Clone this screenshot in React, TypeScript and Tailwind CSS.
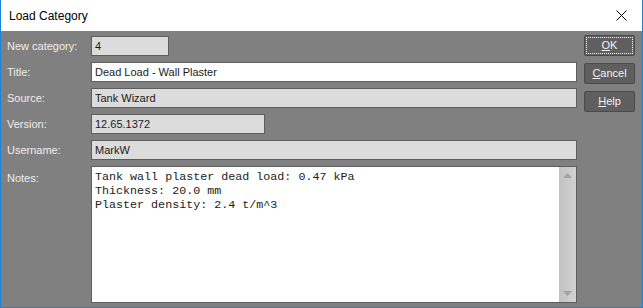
import React from 'react';

const fields = [
  { label: 'New category:', value: '4', width: 'w-[78px]', editable: false },
  { label: 'Title:', value: 'Dead Load - Wall Plaster', width: 'w-full', editable: true },
  { label: 'Source:', value: 'Tank Wizard', width: 'w-full', editable: false },
  { label: 'Version:', value: '12.65.1372', width: 'w-[174px]', editable: false },
  { label: 'Username:', value: 'MarkW', width: 'w-full', editable: false },
];

const notes = ['Tank wall plaster dead load: 0.47 kPa', 'Thickness: 20.0 mm', 'Plaster density: 2.4 t/m^3'];

const DialogButton = ({ hot, rest, focused }: { hot: string; rest: string; focused?: boolean }) => (
  <button
    className={`h-[21px] w-[51px] rounded-[2px] border border-[#4a4a4a] bg-[#5f5f5f] text-[11px] text-[#f2f2f2] leading-none ${
      focused ? 'outline-1 outline-dotted outline-white outline-offset-[-3px]' : ''
    }`}
  >
    <span className="underline underline-offset-1">{hot}</span>
    {rest}
  </button>
);

export default function App() {
  return (
    <div
      className="w-[643px] h-[308px] flex flex-col bg-[#808080] border-x border-b border-[#1883d7]"
      style={{ fontFamily: '"Liberation Sans", Arial, sans-serif' }}
    >
      {/* Title bar */}
      <div className="h-[31px] bg-white flex items-center justify-between pl-[8px] pr-[15px]">
        <span className="text-[12px] text-black">Load Category</span>
        <svg width="11" height="11" viewBox="0 0 11 11" className="text-black">
          <path d="M0.5 0.5 L10.5 10.5 M10.5 0.5 L0.5 10.5" stroke="currentColor" strokeWidth="1" />
        </svg>
      </div>

      {/* Body */}
      <div className="flex pl-[6px] pr-[6px] pt-[5px] gap-[7px]">
        <div className="w-[570px] grid grid-cols-[84px_1fr] gap-y-[6px] text-[11px]">
          {fields.map((f) => (
            <React.Fragment key={f.label}>
              <div className="h-[20px] flex items-center text-[#efefef]">{f.label}</div>
              <div
                className={`h-[20px] ${f.width} flex items-center px-[3px] border border-[#5e5e5e] text-[#1a1a1a] ${
                  f.editable ? 'bg-white' : 'bg-[#dcdcdc]'
                }`}
              >
                {f.value}
              </div>
            </React.Fragment>
          ))}
          <div className="h-[137px] pt-[4px] text-[#efefef]">Notes:</div>
          <div className="h-[137px] flex border border-[#5e5e5e] bg-white">
            <div
              className="flex-1 pt-[3px] pl-[3px] text-[11.7px] leading-[14px] text-[#222]"
              style={{ fontFamily: '"Liberation Mono", "Courier New", monospace' }}
            >
              {notes.map((n) => (
                <div key={n} className="whitespace-pre">
                  {n}
                </div>
              ))}
            </div>
            <div className="w-[17px] flex flex-col items-center justify-between py-[6px] bg-gradient-to-r from-[#c2c2c2] to-[#d2d2d2]">
              <svg width="9" height="5" viewBox="0 0 9 5">
                <path d="M4.5 0 L9 5 L0 5 Z" fill="#a3a3a3" />
              </svg>
              <svg width="9" height="5" viewBox="0 0 9 5">
                <path d="M0 0 L9 0 L4.5 5 Z" fill="#a3a3a3" />
              </svg>
            </div>
          </div>
        </div>

        <div className="flex flex-col gap-[7px] -mt-px">
          <DialogButton hot="O" rest="K" focused />
          <DialogButton hot="C" rest="ancel" />
          <DialogButton hot="H" rest="elp" />
        </div>
      </div>
    </div>
  );
}
